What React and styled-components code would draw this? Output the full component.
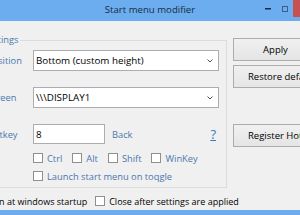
import React from "react";
import styled, { createGlobalStyle } from "styled-components";

const Global = createGlobalStyle`
  html, body { margin: 0; padding: 0; background: #f0f0f0; overflow: hidden; }
  body { width: 300px; height: 215px; font-family: "Open Sans", "Noto Sans", sans-serif; }
`;

const Screen = styled.div`
  width: 300px;
  height: 215px;
  overflow: hidden;
`;

const Window = styled.div`
  width: 372px;
  margin-left: -36px;
  display: flex;
  flex-direction: column;
  background: #6badef;
`;

const TitleBar = styled.div`
  height: 21px;
  display: grid;
  grid-template-columns: 1fr auto 1fr;
  align-items: start;
`;

const Title = styled.div`
  grid-column: 2;
  font-size: 9.6px;
  line-height: 20px;
  color: #1c2b3c;
`;

const Controls = styled.div`
  grid-column: 3;
  justify-self: end;
  display: flex;
  margin-right: 6px;
`;

const CtlButton = styled.div`
  width: ${(p) => p.$w}px;
  height: 17px;
  display: flex;
  align-items: center;
  justify-content: center;
  background: ${(p) => (p.$close ? "#c75050" : "transparent")};
`;

const Client = styled.div`
  background: #f0f0f0;
  height: 189px;
  margin: 0 6px;
  box-sizing: border-box;
  padding: 13px 0 0 0;
  display: flex;
  flex-direction: column;
`;

const TopArea = styled.div`
  display: flex;
  align-items: flex-start;
  gap: 6px;
  padding-left: 2px;
`;

const GroupBox = styled.fieldset`
  margin: 0;
  flex: 0 0 255px;
  width: 255px;
  box-sizing: border-box;
  border: 1px solid #dcdcdc;
  padding: 4px 7px 4px 14px;
`;

const Legend = styled.legend`
  color: #4a78ae;
  font-size: 9.3px;
  padding: 0 2px;
  margin-left: -5px;
  line-height: 12px;
`;

const FormGrid = styled.div`
  display: grid;
  grid-template-columns: 46px 1fr;
  row-gap: 16px;
  align-items: center;
`;

const Label = styled.div`
  color: #4a78ae;
  font-size: 9.3px;
`;

const Combo = styled.div`
  height: 21px;
  box-sizing: border-box;
  background: #fff;
  border: 1px solid #abadb3;
  display: flex;
  align-items: center;
  justify-content: space-between;
  padding: 0 5px 0 2px;
  font-size: 9.8px;
  color: #000;
`;

const HotkeyRow = styled.div`
  display: flex;
  align-items: center;
  height: 20px;
`;

const TextBox = styled.div`
  width: 72px;
  height: 20px;
  box-sizing: border-box;
  background: #fff;
  border: 1px solid #abadb3;
  font-size: 9.8px;
  padding-left: 2px;
  display: flex;
  align-items: center;
`;

const LinkText = styled.span`
  color: #4a78ae;
  font-size: 9.3px;
  margin-left: 7px;
`;

const Help = styled.span`
  margin-left: auto;
  margin-right: 3px;
  color: #3a78c0;
  font-size: 13px;
  text-decoration: underline;
  line-height: 14px;
`;

const CheckRow = styled.div`
  display: flex;
  align-items: center;
  gap: 10px;
  padding-left: ${(p) => p.$indent || 0}px;
  margin-top: ${(p) => p.$mt || 0}px;
  height: 14px;
`;

const Check = styled.label`
  display: flex;
  align-items: center;
  gap: 4px;
  font-size: ${(p) => (p.$plain ? "9px" : "9.3px")};
  color: ${(p) => (p.$plain ? "#000" : "#4a78ae")};
  white-space: nowrap;
`;

const Box = styled.span`
  width: 10px;
  height: 10px;
  box-sizing: border-box;
  border: 1px solid #8f8f8f;
  background: #fff;
`;

const ButtonColumn = styled.div`
  display: flex;
  flex-direction: column;
  align-items: flex-start;
  padding-top: 4px;
`;

const Button = styled.div`
  height: 23px;
  box-sizing: border-box;
  ${(p) => (p.$w ? `width: ${p.$w}px;` : "padding: 0 14px;")}
  margin-top: ${(p) => p.$mt || 0}px;
  border: 1px solid #acacac;
  background: linear-gradient(#f0f0f0, #e5e5e5);
  display: flex;
  align-items: center;
  justify-content: center;
  font-size: 9.5px;
  color: #000;
  white-space: nowrap;
`;

const BottomRow = styled.div`
  display: flex;
  align-items: center;
  gap: 8px;
  margin-top: 6px;
  padding-left: 4px;
  height: 14px;
`;

const FrameBottom = styled.div`
  height: 10px;
`;

const Chevron = () => (
  <svg width="6" height="4" viewBox="0 0 6 4">
    <path d="M0.5 0.5 L3 3 L5.5 0.5" fill="none" stroke="#555" strokeWidth="1" />
  </svg>
);

export default function App() {
  return (
    <Screen>
      <Global />
      <Window>
        <TitleBar>
          <Title>Start menu modifier</Title>
          <Controls>
            <CtlButton $w={17}>
              <svg width="6" height="2"><rect width="6" height="1.5" fill="#1c2b3c" /></svg>
            </CtlButton>
            <CtlButton $w={17}>
              <svg width="6" height="6"><rect x="0.5" y="0.5" width="5" height="5" fill="none" stroke="#3a5d84" /></svg>
            </CtlButton>
            <CtlButton $w={37} $close />
          </Controls>
        </TitleBar>
        <Client>
          <TopArea>
            <GroupBox>
              <Legend>Settings</Legend>
              <FormGrid>
                <Label>Position</Label>
                <Combo>
                  <span>Bottom (custom height)</span>
                  <Chevron />
                </Combo>
                <Label>Screen</Label>
                <Combo>
                  <span>\\\DISPLAY1</span>
                  <Chevron />
                </Combo>
                <Label>Hotkey</Label>
                <HotkeyRow>
                  <TextBox>8</TextBox>
                  <LinkText>Back</LinkText>
                  <Help>?</Help>
                </HotkeyRow>
              </FormGrid>
              <CheckRow $indent={46} $mt={7}>
                <Check><Box />Ctrl</Check>
                <Check><Box />Alt</Check>
                <Check><Box />Shift</Check>
                <Check><Box />WinKey</Check>
              </CheckRow>
              <CheckRow $indent={46} $mt={4}>
                <Check><Box />Launch start menu on toqgle</Check>
              </CheckRow>
            </GroupBox>
            <ButtonColumn>
              <Button $w={85}>Apply</Button>
              <Button $mt={4}>Restore defaults</Button>
              <Button $mt={36}>Register Hotkey</Button>
            </ButtonColumn>
          </TopArea>
          <BottomRow>
            <Check $plain><Box />Run at windows startup</Check>
            <Check $plain><Box />Close after settings are applied</Check>
          </BottomRow>
        </Client>
        <FrameBottom />
      </Window>
    </Screen>
  );
}
